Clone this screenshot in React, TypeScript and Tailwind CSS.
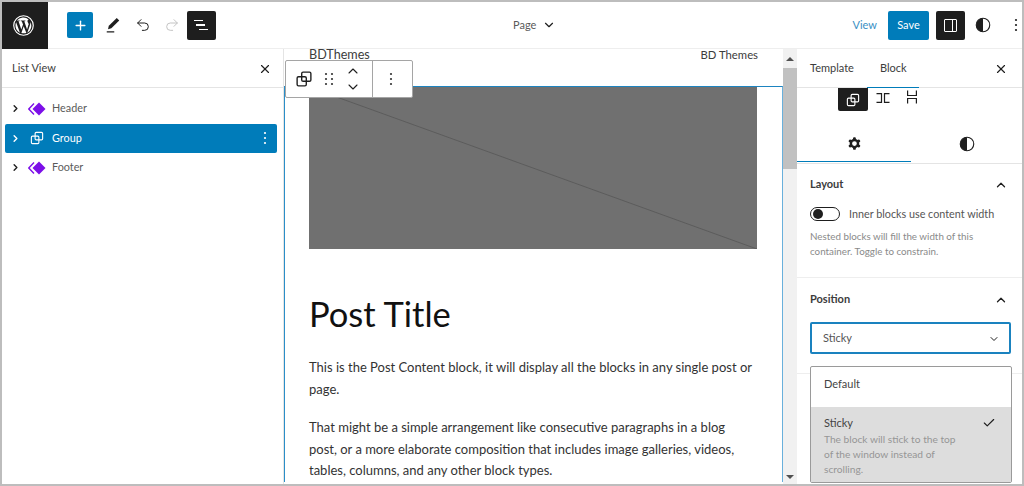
import React from 'react';
import { ChevronDown, ChevronRight, ChevronUp, Check, Plus, Undo2, Redo2, X } from 'lucide-react';

const GroupIcon = ({ className = '' }: { className?: string }) => (
  <svg viewBox="0 0 24 24" width="24" height="24" fill="none" stroke="currentColor" strokeWidth="1.5" className={className}>
    <rect x="4.5" y="9.5" width="10" height="10" rx="1.5" />
    <rect x="9.5" y="4.5" width="10" height="10" rx="1.5" />
  </svg>
);

const Contrast = ({ size = 18 }: { size?: number }) => (
  <svg viewBox="0 0 24 24" width={size} height={size} fill="none">
    <circle cx="12" cy="12" r="9" stroke="currentColor" strokeWidth="1.5" />
    <path d="M12 3a9 9 0 0 0 0 18z" fill="currentColor" />
  </svg>
);

const Dots = ({ className = '' }: { className?: string }) => (
  <svg viewBox="0 0 6 16" width="6" height="16" fill="currentColor" className={className}>
    <circle cx="3" cy="3" r="1.1" />
    <circle cx="3" cy="8" r="1.1" />
    <circle cx="3" cy="13" r="1.1" />
  </svg>
);

const BrandIcon = () => (
  <svg viewBox="0 0 18 14" width="18" height="14">
    <path d="M11 0.5 L17.5 7 L11 13.5 L4.5 7 Z" fill="#7c0fe8" />
    <path d="M6 1.5 L0.8 7 L6 12.5" fill="none" stroke="#7c0fe8" strokeWidth="1.4" />
  </svg>
);

const ListRow = ({ label, active, icon }: { label: string; active?: boolean; icon: React.ReactNode }) => (
  <div className={`flex items-center h-[29px] rounded-[2px] pl-[5px] pr-[9px] text-[10.8px] ${active ? 'bg-[#007cba] text-white' : 'text-[#5a5a5a]'}`}>
    <ChevronRight size={11} strokeWidth={3} className={active ? 'text-white' : 'text-[#1e1e1e]'} />
    <span className="ml-[7px] w-[18px] flex justify-center">{icon}</span>
    <span className="ml-[6px] flex-1">{label}</span>
    {active && <Dots />}
  </div>
);

export default function App() {
  return (
    <div className='font-["Lato","Open_Sans",sans-serif] w-[1024px] h-[486px] border-2 border-[#bdbdbd] bg-white flex flex-col overflow-hidden text-[#1e1e1e]'>
      {/* top bar */}
      <div className="h-[47px] shrink-0 flex items-center border-b border-[#eeeeee] bg-white">
        <div className="w-[46px] h-[47px] bg-[#1e1e1e] flex items-center justify-center pr-[3px]">
          <svg viewBox="0 0 24 24" width="23" height="23">
            <circle cx="12" cy="12" r="10.2" fill="none" stroke="white" strokeWidth="1.2" />
            <path d="M3.6 12c0 3.3 1.9 6.2 4.7 7.6L4.3 8.6A8.4 8.4 0 0 0 3.6 12zm14-.4c0-1-.4-1.8-.7-2.3-.4-.7-.8-1.2-.8-1.9 0-.7.6-1.4 1.4-1.4h.1A8.4 8.4 0 0 0 5 6.9h.5c.9 0 2.2-.1 2.2-.1.4 0 .5.6 0 .7 0 0-.4 0-.9.1l2.9 8.7 1.8-5.3-1.3-3.4c-.4 0-.8-.1-.8-.1-.4 0-.4-.7 0-.7 0 0 1.3.1 2.1.1.9 0 2.2-.1 2.2-.1.4 0 .5.6 0 .7 0 0-.4 0-.9.1l2.9 8.6.8-2.7c.3-1.1.6-1.9.6-2.6zm-5.4 1.2-2.4 7a8.4 8.4 0 0 0 5.2-.1l-.1-.1zm6.9-4.6.1.9c0 .9-.2 1.8-.6 3l-2.6 7.4a8.4 8.4 0 0 0 3.1-11.3z" fill="white" />
          </svg>
        </div>
        <button className="ml-[19px] w-[26px] h-[26px] bg-[#007cba] rounded-[2px] flex items-center justify-center text-white">
          <Plus size={15} strokeWidth={2.2} />
        </button>
        <svg viewBox="0 0 24 24" width="20" height="20" className="ml-[10px]">
          <path d="M16.5 3.5l3 3L10 16l-4 1 1-4z" fill="#1e1e1e" />
          <rect x="4.5" y="19.5" width="9" height="1.5" fill="#1e1e1e" />
        </svg>
        <Undo2 size={16} strokeWidth={1.5} className="ml-[12px]" />
        <Redo2 size={16} strokeWidth={1.5} className="ml-[13px] text-[#c4c4c4]" />
        <div className="ml-[7px] w-[29px] h-[29px] bg-[#1e1e1e] rounded-[2px] flex flex-col justify-center gap-[3px] pl-[7px]">
          <span className="block w-[9px] h-[1.5px] bg-white" />
          <span className="block w-[9px] h-[1.5px] bg-white ml-[2px]" />
          <span className="block w-[9px] h-[1.5px] bg-white ml-[5px]" />
        </div>
        <div className="ml-[297px] flex items-center text-[11px] text-[#5a5a5a]">
          Page
          <ChevronDown size={14} strokeWidth={2} className="ml-[6px] text-[#1e1e1e]" />
        </div>
        <div className="flex-1 flex items-center justify-end">
          <span className="text-[11px] text-[#3a8fc4]">View</span>
          <button className="ml-[11px] w-[41px] h-[29px] bg-[#007cba] rounded-[2px] text-white text-[11px]">Save</button>
          <div className="ml-[7px] w-[29px] h-[29px] bg-[#1e1e1e] rounded-[2px] flex items-center justify-center">
            <span className="block w-[13px] h-[13px] border-[1.5px] border-white rounded-[1px] relative">
              <span className="absolute right-[3px] top-0 bottom-0 w-[1.5px] bg-white" />
            </span>
          </div>
          <span className="ml-[8px] w-[20px] flex justify-center"><Contrast /></span>
          <Dots className="ml-[20px] mr-[3px]" />
        </div>
      </div>

      <div className="flex-1 flex min-h-0">
        {/* list view */}
        <div className="w-[282px] shrink-0 border-r border-[#e4e4e4] flex flex-col">
          <div className="h-[39px] border-b border-[#e4e4e4] flex items-center justify-between pl-[10px] pr-[11px] pt-[1px] text-[11px] text-[#3c3c3c]">
            List View
            <X size={14} strokeWidth={2} className="text-[#1e1e1e]" />
          </div>
          <div className="pt-[6px] pl-[3px] pr-[6px] flex flex-col gap-[0.5px]">
            <ListRow label="Header" icon={<BrandIcon />} />
            <ListRow label="Group" active icon={<GroupIcon className="w-[18px] h-[18px]" />} />
            <ListRow label="Footer" icon={<BrandIcon />} />
          </div>
        </div>

        {/* canvas */}
        <div className="flex-1 relative flex min-w-0">
          <div className="flex-1 min-w-0">
            <div className="h-[37px] flex justify-between pl-[25px] pr-[25px] text-[12.6px] leading-[11px] text-[#3c3c3c]">
              <span>BDThemes</span>
              <span className="text-[11.3px]">BD Themes</span>
            </div>
            <div className="border-x border-t border-x-[#69b0dc] border-t-[#1d84c0] border-l-[#2a8ec8] pl-[24px] pr-[25px]">
              <div className="h-[162px] bg-[#707070] overflow-hidden">
                <svg viewBox="0 0 448 162" width="100%" height="162">
                  <line x1="0" y1="0" x2="448" y2="162" stroke="#5c5c5c" strokeWidth="1" />
                </svg>
              </div>
              <h1 className="mt-[41px] text-[34.5px] leading-[48px] font-normal text-[#111111]">Post Title</h1>
              <p className="mt-[19px] text-[13px] leading-[21.5px] text-[#333333]">
                This is the Post Content block, it will display all the blocks in any single post or page.
              </p>
              <p className="mt-[17px] pr-[6px] text-[13px] leading-[21.5px] text-[#333333]">
                That might be a simple arrangement like consecutive paragraphs in a blog post, or a more elaborate composition that includes image galleries, videos, tables, columns, and any other block types.
              </p>
            </div>
          </div>
          {/* scrollbar */}
          <div className="w-[14px] shrink-0 bg-[#f1f1f1] flex flex-col">
            <div className="h-[19px] flex items-center justify-center">
              <span className="block w-0 h-0 border-x-[4px] border-x-transparent border-b-[4px] border-b-[#505050]" />
            </div>
            <div className="h-[101px] bg-[#c1c1c1]" />
            <div className="flex-1" />
            <div className="h-[15px] flex items-center justify-center">
              <span className="block w-0 h-0 border-x-[4px] border-x-transparent border-t-[4px] border-t-[#505050]" />
            </div>
          </div>

          {/* floating block toolbar */}
          <div className="absolute left-[1px] top-[11px] w-[128px] h-[38px] bg-white border border-[#a5a5a5] rounded-[2px] flex items-center text-[#1e1e1e]">
            <span className="ml-[7px]"><GroupIcon className="w-[22px] h-[22px]" /></span>
            <svg viewBox="0 0 10 14" width="10" height="14" className="ml-[9px]" fill="#333333">
              <circle cx="2" cy="2" r="1.1" /><circle cx="8" cy="2" r="1.1" />
              <circle cx="2" cy="7" r="1.1" /><circle cx="8" cy="7" r="1.1" />
              <circle cx="2" cy="12" r="1.1" /><circle cx="8" cy="12" r="1.1" />
            </svg>
            <span className="ml-[11px] flex flex-col items-center gap-[1px]">
              <ChevronUp size={16} strokeWidth={1.6} className="-mb-[1px]" />
              <ChevronDown size={16} strokeWidth={1.6} />
            </span>
            <span className="ml-[11px] h-full w-px bg-[#a5a5a5]" />
            <Dots className="ml-[15px] text-[#333333]" />
          </div>
        </div>

        {/* settings sidebar */}
        <div className="w-[225px] shrink-0 relative flex flex-col text-[11px]">
          <div className="h-[39px] shrink-0 border-b border-[#e4e4e4] flex items-center pl-[13px] pr-[14px] pt-[1px] text-[#3c3c3c] relative">
            <span>Template</span>
            <span className="ml-[26px]">Block</span>
            <X size={14} strokeWidth={2} className="ml-auto text-[#1e1e1e]" />
            <span className="absolute left-[70px] w-[52px] bottom-[-1px] h-[1.5px] bg-[#007cba]" />
          </div>
          <div className="h-[23px] shrink-0 flex items-start pl-[41px]">
            <span className="w-[30px] h-[23px] bg-[#1e1e1e] rounded-b-[2px] flex items-center justify-center text-white">
              <GroupIcon className="w-[18px] h-[18px]" />
            </span>
            <svg viewBox="0 0 14 10" width="14" height="10" className="ml-[8px] mt-[5px]" fill="none" stroke="#1e1e1e" strokeWidth="1.2">
              <path d="M0.5 0.6H5.5V9.4H0.5M13.5 0.6H8.5V9.4H13.5" />
            </svg>
            <svg viewBox="0 0 10 14" width="10" height="14" className="ml-[17px] mt-[2px]" fill="none" stroke="#1e1e1e" strokeWidth="1.2">
              <path d="M0.6 0.5V5.5H9.4V0.5M0.6 13.5V8.5H9.4V13.5" />
            </svg>
          </div>
          <div className="h-[53px] shrink-0 border-b border-[#e4e4e4] flex relative pt-[16px] pb-[3px]">
            <span className="w-[114px] flex items-center justify-center">
              <svg viewBox="0 0 24 24" width="19" height="19" fill="#1e1e1e">
                <path fillRule="evenodd" clipRule="evenodd" d="M10.289 4.836A1 1 0 0 1 11.275 4h1.306a1 1 0 0 1 .987.836l.244 1.466c.787.26 1.503.679 2.108 1.218l1.393-.522a1 1 0 0 1 1.216.437l.653 1.13a1 1 0 0 1-.23 1.273l-1.148.944a6.025 6.025 0 0 1 0 2.435l1.149.946a1 1 0 0 1 .23 1.272l-.653 1.13a1 1 0 0 1-1.216.437l-1.394-.522c-.605.54-1.32.958-2.108 1.218l-.244 1.466a1 1 0 0 1-.987.836h-1.306a1 1 0 0 1-.986-.836l-.244-1.466a5.995 5.995 0 0 1-2.108-1.218l-1.394.522a1 1 0 0 1-1.217-.436l-.653-1.131a1 1 0 0 1 .23-1.272l1.149-.946a6.026 6.026 0 0 1 0-2.435l-1.148-.944a1 1 0 0 1-.23-1.272l.653-1.131a1 1 0 0 1 1.217-.437l1.393.522a5.994 5.994 0 0 1 2.108-1.218l.244-1.466zM14.929 12a3 3 0 1 1-6 0 3 3 0 0 1 6 0z" />
              </svg>
            </span>
            <span className="flex-1 flex items-center justify-center"><Contrast /></span>
            <span className="absolute left-0 w-[114px] bottom-[1px] h-[1.5px] bg-[#007cba]" />
          </div>
          <div className="h-[114px] shrink-0 border-b border-[#eeeeee] pl-[13px] pr-[14px] pt-[13px]">
            <div className="flex justify-between items-center font-bold text-[#3c3c3c] h-[15px]">
              Layout
              <ChevronUp size={14} strokeWidth={2.2} className="text-[#1e1e1e]" />
            </div>
            <div className="flex items-center mt-[14px] h-[16px]">
              <span className="w-[30px] h-[14px] rounded-full border border-[#1e1e1e] flex items-center pl-[2px]">
                <span className="block w-[10px] h-[10px] rounded-full bg-[#1e1e1e]" />
              </span>
              <span className="ml-[9px] text-[10.8px] text-[#555555]">Inner blocks use content width</span>
            </div>
            <p className="mt-[7px] text-[9.8px] leading-[15px] text-[#8a8a8a]">Nested blocks will fill the width of this container. Toggle to constrain.</p>
          </div>
          <div className="h-[96px] shrink-0 border-b border-[#eeeeee] pl-[13px] pr-[10px] pt-[14px]">
            <div className="flex justify-between items-center font-bold text-[#3c3c3c] h-[15px] pr-[4px]">
              Position
              <ChevronUp size={14} strokeWidth={2.2} className="text-[#1e1e1e]" />
            </div>
            <div className="mt-[15px] w-[201px] h-[32px] border-2 border-[#1a82bf] rounded-[2px] flex items-center justify-between pl-[11px] pr-[9px] pt-[1px] text-[#555555]">
              Sticky
              <ChevronDown size={12} strokeWidth={2} className="text-[#1e1e1e]" />
            </div>
          </div>

          {/* select popover */}
          <div className="absolute left-[13px] top-[317px] w-[202px] h-[117px] bg-white border border-[#9a9a9a] rounded-[2px] overflow-hidden flex flex-col">
            <div className="h-[40px] shrink-0 flex items-center pl-[13px] pb-[5px] text-[#444444]">Default</div>
            <div className="flex-1 bg-[#dddddd] pl-[13px] pr-[21px] pt-[8px] relative">
              <div className="text-[#444444] leading-[15px]">Sticky</div>
              <p className="mt-[2px] w-[140px] text-[10.2px] leading-[15px] text-[#969696]">The block will stick to the top of the window instead of scrolling.</p>
              <Check size={14} strokeWidth={2} className="absolute right-[15px] top-[9px] text-[#1e1e1e]" />
            </div>
          </div>
        </div>
      </div>
    </div>
  );
}
